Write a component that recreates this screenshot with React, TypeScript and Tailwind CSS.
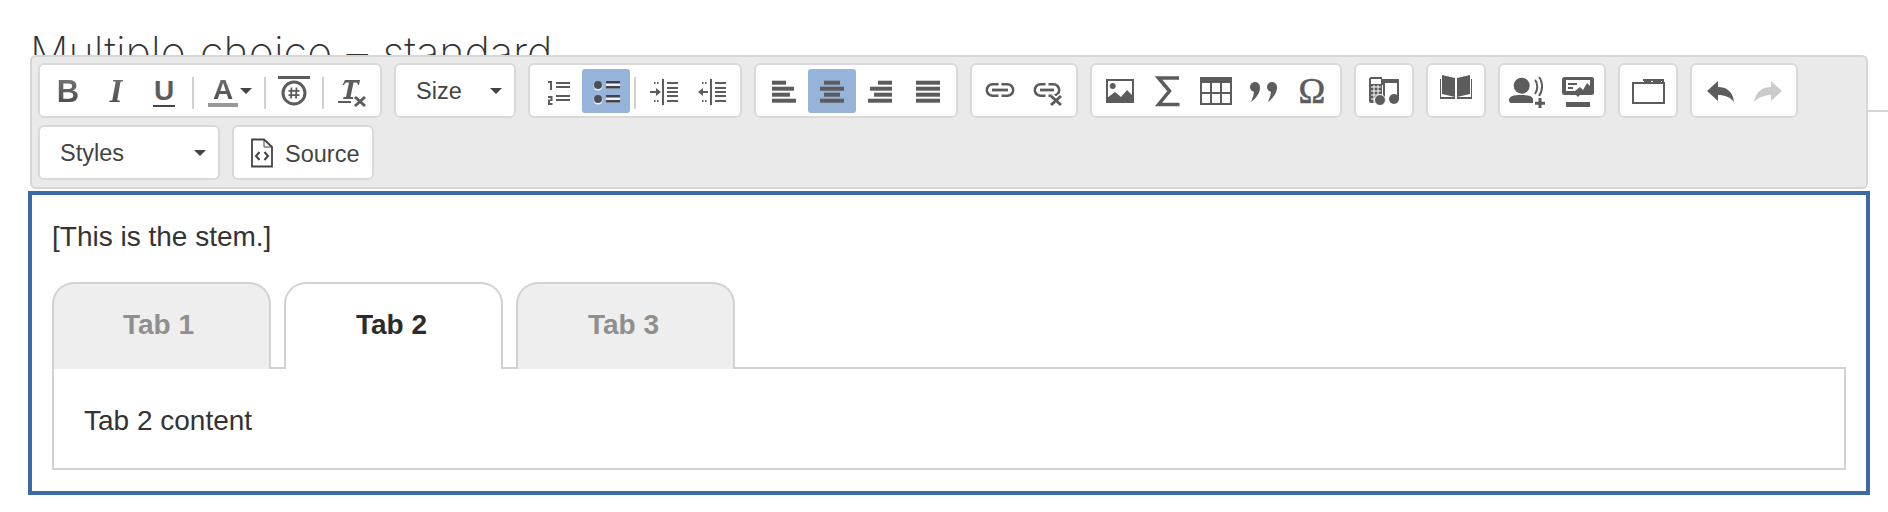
import type { ReactNode } from 'react';

const INK = '#5c5c5c';
const GLYPH = 'bg-linear-to-b from-[#777] to-[#484848] bg-clip-text text-transparent';

// every icon is drawn in the 48x44 box of its button
function Icon({ children }: { children: ReactNode }) {
  return (
    <svg width="48" height="44" viewBox="0 0 48 44" fill={INK} className="block">
      {children}
    </svg>
  );
}

function Btn({ children, active, className }: { children: ReactNode; active?: boolean; className?: string }) {
  return (
    <div className={`flex h-[44px] w-[48px] shrink-0 items-center justify-center rounded-[3px] ${active ? 'bg-[#96b3da]' : ''} ${className ?? ''}`}>
      {children}
    </div>
  );
}

function Sep() {
  return <div className="mx-[4px] mt-[8px] h-[32px] w-[2px] shrink-0 bg-[#d2d2d2]" />;
}

function Group({ children, className }: { children: ReactNode; className?: string }) {
  return (
    <div className={`flex h-[55px] shrink-0 items-start rounded-[6px] border-2 border-[#d9d9d9] bg-white pl-[4px] pr-[4px] pt-[4px] ${className ?? ''}`}>
      {children}
    </div>
  );
}

function Caret({ className }: { className?: string }) {
  return <div className={`h-0 w-0 border-x-[6px] border-t-[6px] border-x-transparent border-t-[#444] ${className ?? ''}`} />;
}

function Dropdown({ label, width, caretGap }: { label: string; width: string; caretGap: string }) {
  return (
    <div className={`flex h-[55px] shrink-0 items-center rounded-[6px] border-2 border-[#d9d9d9] bg-white pl-[20px] text-[#444] ${width}`}>
      <span className="pt-[2px] text-[23.5px]">{label}</span>
      <Caret className={caretGap} />
    </div>
  );
}

function Lines({ rows, x1, x2 }: { rows: number[]; x1: number; x2: number }) {
  return (
    <>
      {rows.map((y) => (
        <rect key={y} x={x1} y={y} width={x2 - x1} height="2" />
      ))}
    </>
  );
}

function AlignIcon({ widths, anchor }: { widths: number[]; anchor: 'left' | 'center' | 'right' }) {
  return (
    <Icon>
      {widths.map((w, i) => {
        const x = anchor === 'left' ? 12 : anchor === 'right' ? 36 - w : 24 - w / 2;
        return <rect key={i} x={x} y={11.7 + i * 6} width={w} height="4" />;
      })}
    </Icon>
  );
}

// two open links and the bar that joins them, x is the left edge
function Chain({ x = 10, w = 28 }: { x?: number; w?: number }) {
  const r = x + w;
  const mid = x + w / 2;
  return (
    <g fill="none" stroke={INK} strokeWidth="2.6">
      <path d={`M${mid - 1.5} 15.3H${x + 6.5}a5.7 5.7 0 0 0 0 11.4H${mid - 1.5}`} />
      <path d={`M${mid + 1.5} 15.3H${r - 6.5}a5.7 5.7 0 0 1 0 11.4H${mid + 1.5}`} />
      <path d={`M${x + 6} 21H${r - 6}`} strokeWidth="2.8" />
    </g>
  );
}

const CROSS = 'M27 27L37 36M37 27L27 36';

export default function App() {
  return (
    <div className="h-[512px] w-[1888px] overflow-hidden bg-white font-['Liberation_Sans',sans-serif] text-[#333]">
      <div className="h-[55px] overflow-hidden pl-[30px] pt-[27px]">
        <h1 className="whitespace-nowrap font-['Inter',sans-serif] text-[43px] font-extralight leading-[50px] text-[#333] [word-spacing:2.5px]">
          Multiple choice – standard
        </h1>
      </div>

      <div className="flex items-start pl-[30px]">
        <div className="flex h-[134px] w-[1838px] shrink-0 flex-col gap-[7px] rounded-[6px] border-2 border-[#d6d6d6] bg-[#eaeaea] pl-[6px] pt-[6px]">
          <div className="flex gap-[12px]">
            <Group className="w-[344px]">
              <Btn><span className={`text-[31px] font-bold leading-none ${GLYPH}`}>B</span></Btn>
              <Btn><span className={`font-['Liberation_Serif',serif] text-[34px] font-bold italic leading-none ${GLYPH}`}>I</span></Btn>
              <Btn><span className="border-b-2 border-[#444] px-[1px] text-[28px] font-bold leading-[29px] text-[#5c5c5c]">U</span></Btn>
              <Sep />
              <div className="relative h-[44px] w-[62px] shrink-0">
                <span className={`absolute left-[15px] top-[7px] text-[28px] font-bold leading-none ${GLYPH}`}>A</span>
                <div className="absolute left-[10px] top-[34px] h-[4px] w-[30px] bg-[#999]" />
                <Caret className="absolute left-[42px] top-[19px]" />
              </div>
              <Sep />
              <Btn>
                <Icon>
                  <rect x="8" y="7" width="32" height="3" />
                  <circle cx="24" cy="24" r="11" fill="none" stroke={INK} strokeWidth="3" />
                  <path d="M21.5 18.5L21 29.5M26.5 18.5L26 29.5M18.5 21.8H29.5M18.5 26.2H29.5" fill="none" stroke={INK} strokeWidth="1.8" />
                </Icon>
              </Btn>
              <Sep />
              <Btn>
                <Icon>
                  <path d="M17 11H32L31 16H30C29.5 14 29 13.5 27 13.5H25.5L22.5 28H25V30H15L15.5 28H18L21 13.5H19.5C17.5 13.5 17 14 16 16H14.5Z" />
                  <rect x="10" y="32" width="13" height="2" />
                  <path d="M27 28L37 37M37 28L27 37" fill="none" stroke={INK} strokeWidth="3" />
                </Icon>
              </Btn>
            </Group>

            <Dropdown label="Size" width="w-[122px]" caretGap="ml-[28px]" />

            <Group className="w-[214px]">
              <Btn>
                <Icon>
                  <path d="M14 12H18V21H16V14H14ZM14 27H18.5V32H16V34H18.5V36H14V30.5H16.5V29H14Z" />
                  <Lines rows={[13, 17, 26, 30]} x1={22} x2={36} />
                </Icon>
              </Btn>
              <Btn active>
                <Icon>
                  <circle cx="16" cy="17" r="4.5" fill="#eef3fa" />
                  <circle cx="16" cy="31" r="4.5" fill="#eef3fa" />
                  <circle cx="16" cy="16" r="4" fill="#4c4f55" />
                  <circle cx="16" cy="30" r="4" fill="#4c4f55" />
                  <rect x="24" y="12.5" width="14" height="7" fill="#eef3fa" />
                  <rect x="24" y="26.5" width="14" height="7" fill="#eef3fa" />
                  <g fill="#3f4249">
                    <rect x="24" y="12" width="14" height="2.5" />
                    <rect x="24" y="17" width="14" height="2.5" />
                    <rect x="24" y="26" width="14" height="2.5" />
                    <rect x="24" y="31" width="14" height="2.5" />
                  </g>
                </Icon>
              </Btn>
              <Sep />
              <Btn>
                <Icon>
                  <rect x="22" y="10" width="2" height="26" />
                  <Lines rows={[13, 18, 22, 26, 31]} x1={27} x2={38} />
                  <path d="M10 22H16V19L21 23L16 27V24H10Z" />
                  <path d="M14 14H15.5M17 14H18.5M14 32H15.5M17 32H18.5" stroke={INK} strokeWidth="2" />
                </Icon>
              </Btn>
              <Btn>
                <Icon>
                  <rect x="22" y="10" width="2" height="26" />
                  <Lines rows={[13, 18, 22, 26, 31]} x1={27} x2={38} />
                  <path d="M20 22H15V19L10 23L15 27V24H20Z" />
                  <path d="M14 14H15.5M17 14H18.5M14 32H15.5M17 32H18.5" stroke={INK} strokeWidth="2" />
                </Icon>
              </Btn>
            </Group>

            <Group className="w-[204px]">
              <Btn><AlignIcon widths={[14, 22, 18, 24]} anchor="left" /></Btn>
              <Btn active><AlignIcon widths={[16, 24, 16, 24]} anchor="center" /></Btn>
              <Btn><AlignIcon widths={[14, 22, 18, 24]} anchor="right" /></Btn>
              <Btn><AlignIcon widths={[24, 24, 24, 24]} anchor="left" /></Btn>
            </Group>

            <Group className="w-[108px]">
              <Btn><Icon><Chain /></Icon></Btn>
              <Btn>
                <Icon>
                  <Chain w={26} />
                  <path d={CROSS} fill="none" stroke="#fff" strokeWidth="6" />
                  <path d={CROSS} fill="none" stroke={INK} strokeWidth="3" />
                </Icon>
              </Btn>
            </Group>

            <Group className="w-[252px]">
              <Btn>
                <Icon>
                  <rect x="11" y="11" width="26" height="22" fill="none" stroke={INK} strokeWidth="2" />
                  <circle cx="16.7" cy="17" r="3" />
                  <path d="M11 32L11 29L19 23L25 28L31 21L37 27V33H11Z" />
                </Icon>
              </Btn>
              <Btn>
                <Icon>
                  <path d="M35 9H14.5L25.5 22L14.5 35.5H35.5" fill="none" stroke={INK} strokeWidth="3.5" />
                </Icon>
              </Btn>
              <Btn>
                <Icon>
                  <rect x="8" y="8" width="32" height="6" />
                  <path d="M9 13V35H39V13M19 14V35H29V14M9 24H39" fill="none" stroke={INK} strokeWidth="2" />
                </Icon>
              </Btn>
              <Btn>
                <Icon>
                  <circle cx="15" cy="18" r="5" />
                  <path d="M20 18C20 25 15 30 11 33C13 28 14 25 14 21Z" />
                  <circle cx="32" cy="18" r="5" />
                  <path d="M37 18C37 25 32 30 28 33C30 28 31 25 31 21Z" />
                </Icon>
              </Btn>
              <Btn>
                <span className="font-['Liberation_Serif',serif] text-[36px] leading-none text-[#5c5c5c] [-webkit-text-stroke:0.6px_#5c5c5c]">Ω</span>
              </Btn>
            </Group>

            <Group className="w-[60px]">
              <Btn>
                <Icon>
                  <path d="M11 8H22V10H23V16H22V26H17V34H11C10 34 9 33 9 32V10C9 9 10 8 11 8Z" />
                  <rect x="11" y="10" width="10" height="5" fill="#fff" />
                  <path d="M11 18H21M11 22H21M11 26H18M11 30H18M14 16V34M18 16V26" fill="none" stroke="#fff" strokeWidth="1" />
                  <rect x="23" y="10" width="16" height="4" />
                  <rect x="23" y="10" width="2" height="21" />
                  <rect x="37" y="10" width="2" height="20" />
                  <circle cx="20" cy="31" r="5.5" stroke="#fff" strokeWidth="1" />
                  <circle cx="34" cy="30" r="5" />
                </Icon>
              </Btn>
            </Group>

            <Group className="w-[60px]">
              <Btn>
                <Icon>
                  <path d="M8 10V30H23V28L9 28V10Z" />
                  <path d="M40 10V30H25V28L39 28V10Z" />
                  <path d="M10 6L23 9V28L10 25Z" />
                  <path d="M38 6L25 9V28L38 25Z" />
                </Icon>
              </Btn>
            </Group>

            <Group className="w-[108px]">
              <Btn>
                <Icon>
                  <circle cx="17.7" cy="16.7" r="8" />
                  <path d="M5 31C5 27 10 26 17 26C24 26 28 27 29 30V34H7C6 34 5 33 5 31Z" />
                  <path d="M31 11C34 14 34 21 31 25M35 8C39 13 39 22 35 27" fill="none" stroke={INK} strokeWidth="2" />
                  <path d="M36 29V39M31 34.3H41" fill="none" stroke={INK} strokeWidth="3" />
                </Icon>
              </Btn>
              <Btn>
                <Icon>
                  <rect x="10" y="8" width="32" height="18" rx="2.5" />
                  <rect x="14" y="11" width="24" height="11" fill="#fff" />
                  <path d="M16 14H25V16H16ZM16 18H21V20H16Z" />
                  <path d="M23 22L28 18L31 21L35 14L38 17V24H30L26 28L22 24Z" />
                  <rect x="14" y="33" width="24" height="5" />
                </Icon>
              </Btn>
            </Group>

            <Group className="w-[60px]">
              <Btn>
                <Icon>
                  <path d="M9 14H40V34H9Z" fill="none" stroke={INK} strokeWidth="2" />
                  <path d="M19 11H39V14M20 12H27M29 12H37" fill="none" stroke={INK} strokeWidth="2" />
                </Icon>
              </Btn>
            </Group>

            <Group className="w-[108px]">
              <Btn>
                <Icon>
                  <path d="M11 22L22 12V18C30 18 37 22 38 33C34 28 29 26 22 26V32Z" />
                </Icon>
              </Btn>
              <Btn>
                <Icon>
                  <path d="M38 22L27 12V18C19 18 12 22 10 33C15 28 20 26 27 26V32Z" fill="#cbcbcb" />
                </Icon>
              </Btn>
            </Group>
          </div>

          <div className="flex gap-[12px]">
            <Dropdown label="Styles" width="w-[182px]" caretGap="ml-[70px]" />
            <div className="flex h-[55px] w-[142px] shrink-0 items-center rounded-[6px] border-2 border-[#d9d9d9] bg-white pl-[16px] text-[#444]">
              <svg width="24" height="30" viewBox="0 0 24 30" className="block shrink-0" fill="none" stroke="#444">
                <path d="M2 1.5H14L22 9V28.5H2Z" strokeWidth="1.8" />
                <path d="M14 1.5V9H22" strokeWidth="1" />
                <path d="M9.5 14L6 18L9.5 22M14.5 14L18 18L14.5 22" strokeWidth="2" />
              </svg>
              <span className="ml-[11px] pt-[4px] text-[23.5px]">Source</span>
            </div>
          </div>
        </div>
        <div className="mt-[55px] h-[2px] flex-1 bg-[#d6d6d6]" />
      </div>

      <div className="ml-[28px] mt-[2px] h-[304px] w-[1842px] border-4 border-[#3c6aa5] pl-[20px]">
        <p className="flex h-[83px] items-center text-[28px] text-[#333]">[This is the stem.]</p>
        <div className="relative z-10 mt-[4px] -mb-[2px] flex h-[87px] gap-[13px]">
          <div className="flex w-[219px] items-center justify-center rounded-t-[22px] border-2 border-b-0 border-[#d2d2d2] bg-[#eee] pb-[3px] pr-[6px] text-[28px] font-bold text-[#8f8f8f]">Tab 1</div>
          <div className="flex w-[219px] items-center justify-center rounded-t-[22px] border-2 border-b-0 border-[#d2d2d2] bg-white pb-[3px] pr-[4px] text-[28px] font-bold text-[#2b2b2b]">Tab 2</div>
          <div className="flex w-[219px] items-center justify-center rounded-t-[22px] border-2 border-b-0 border-[#d2d2d2] bg-[#eee] pb-[3px] pr-[4px] text-[28px] font-bold text-[#8f8f8f]">Tab 3</div>
        </div>
        <div className="flex h-[103px] w-[1794px] items-center border-2 border-[#d2d2d2] pl-[30px] pt-[4px] text-[28px] text-[#333]">Tab 2 content</div>
      </div>
    </div>
  );
}
